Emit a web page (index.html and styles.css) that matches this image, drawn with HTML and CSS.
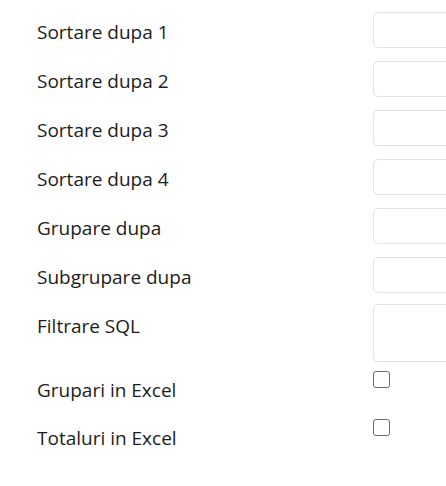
FILE: index.html
```html
<!DOCTYPE html>
<html lang="ro">
<head>
<meta charset="UTF-8">
<meta name="viewport" content="width=device-width, initial-scale=1.0">
<title>Optiuni raport</title>
<link rel="stylesheet" href="styles.css">
</head>
<body>

<div class="options">
    <div class="row">
        <label class="row-label" for="sort1">Sortare dupa 1</label>
        <input type="text" class="field" id="sort1">
    </div>
    <div class="row">
        <label class="row-label" for="sort2">Sortare dupa 2</label>
        <input type="text" class="field" id="sort2">
    </div>
    <div class="row">
        <label class="row-label" for="sort3">Sortare dupa 3</label>
        <input type="text" class="field" id="sort3">
    </div>
    <div class="row">
        <label class="row-label" for="sort4">Sortare dupa 4</label>
        <input type="text" class="field" id="sort4">
    </div>
    <div class="row">
        <label class="row-label" for="group">Grupare dupa</label>
        <input type="text" class="field" id="group">
    </div>
    <div class="row">
        <label class="row-label" for="subgroup">Subgrupare dupa</label>
        <input type="text" class="field" id="subgroup">
    </div>
    <div class="row row-sql">
        <label class="row-label" for="sql">Filtrare SQL</label>
        <textarea class="field field-area" id="sql"></textarea>
    </div>
    <div class="row row-check">
        <label class="row-label" for="excelGroups">Grupari in Excel</label>
        <input type="checkbox" class="check" id="excelGroups">
    </div>
    <div class="row row-check">
        <label class="row-label" for="excelTotals">Totaluri in Excel</label>
        <input type="checkbox" class="check" id="excelTotals">
    </div>
</div>

</body>
</html>
```

FILE: styles.css
```css
body {
    margin: 0;
    overflow: hidden;
    background: #ffffff;
    font-family: "Open Sans", "Liberation Sans", sans-serif;
    color: #1c1c1c;
}

/* form wrapper */
.options {
    padding: 12px 0 0 37px;
}

.row {
    display: flex;
    align-items: flex-start;
    margin-bottom: 13px;
}

.row-label {
    flex: 0 0 336px;
    font-size: 19px;
    line-height: 28px;
    padding-top: 6px;
}

/* text inputs, cut off on the right like the original */
.field {
    flex: 0 0 200px;
    width: 200px;
    height: 36px;
    box-sizing: border-box;
    border: 1px solid #dfe2e6;
    border-radius: 5px;
    background: #fff;
    padding: 6px 12px;
    font: inherit;
    font-size: 15px;
}

.row-sql {
    margin-top: -2px;
    margin-bottom: 9px;
}

.row-sql .row-label {
    padding-top: 8px;
}

.field-area {
    height: 58px;
    resize: none;
}

.row-check {
    height: 35px;
}

.row-check .row-label {
    padding-top: 5px;
}

.check {
    appearance: none;
    -webkit-appearance: none;
    width: 17px;
    height: 17px;
    margin: 0;
    box-sizing: border-box;
    border: 1.5px solid #6a6a6a;
    border-radius: 3px;
    background: #fff;
}
```
